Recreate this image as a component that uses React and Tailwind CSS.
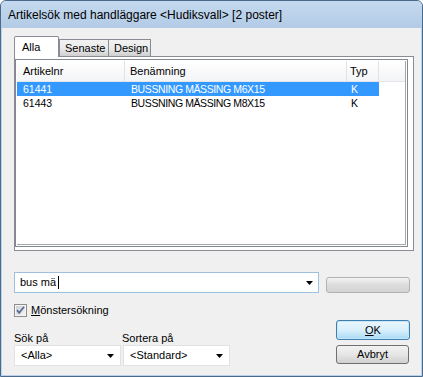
import React from 'react';

const font = "font-['Liberation_Sans',Arial,sans-serif]";

function Arrow() {
  return (
    <svg width="7" height="4" viewBox="0 0 7 4" className="shrink-0">
      <path d="M0 0h7L3.5 4z" fill="#000" />
    </svg>
  );
}

function Tab({ label, active, className = '' }) {
  if (active) {
    return (
      <div className="relative z-10 w-[45px] h-full bg-white border border-b-0 border-[#898c95] rounded-t-[2px] pl-[7px] pt-[3px] text-[11px] leading-[14px]">
        {label}
      </div>
    );
  }
  return (
    <div
      className={`mb-px h-[17px] bg-gradient-to-b from-[#f2f2f2] via-[#ebebeb] to-[#cfcfcf] border-t border-r border-[#898c95] text-[11px] leading-[14px] pt-px ${className}`}
    >
      {label}
    </div>
  );
}

const rows = [
  { nr: '61441', name: 'BUSSNING MÄSSING M6X15', typ: 'K', selected: true },
  { nr: '61443', name: 'BUSSNING MÄSSING M8X15', typ: 'K' },
];

function ListView() {
  return (
    <div className="flex-1 flex flex-col border border-[#828790] p-px bg-white">
      <div className="flex-1 flex flex-col border border-[#a3a7ad] border-l-0 border-t-0">
        {/* header */}
        <div className="flex h-[21px] bg-gradient-to-b from-white to-[#f3f4f6] border-b border-[#e3e6ea] text-[11px]">
          <div className="w-[108px] border-r border-[#dfe3e8] pl-[6px] flex items-center">Artikelnr</div>
          <div className="w-[222px] border-r border-[#dfe3e8] pl-[5px] flex items-center">Benämning</div>
          <div className="w-[32px] border-r border-[#dfe3e8] pl-[3px] flex items-center">Typ</div>
          <div className="flex-1" />
        </div>
        {rows.map((r) => (
          <div
            key={r.nr}
            className={`flex w-[362px] h-[14px] items-center text-[10.5px] leading-[14px] ${
              r.selected ? 'bg-[#3399ff] text-white' : 'text-black'
            }`}
          >
            <div className="w-[108px] pl-[6px]">{r.nr}</div>
            <div className="w-[222px] pl-[6px] tracking-[-0.4px]">{r.name}</div>
            <div className="w-[32px] pl-[4px]">{r.typ}</div>
          </div>
        ))}
      </div>
    </div>
  );
}

function Checkbox() {
  return (
    <svg width="13" height="13" viewBox="0 0 13 13" className="shrink-0">
      <defs>
        <linearGradient id="cb" x1="0" y1="0" x2="1" y2="1">
          <stop offset="0" stopColor="#cfd0d2" />
          <stop offset="1" stopColor="#f4f4f4" />
        </linearGradient>
      </defs>
      <rect x="0.5" y="0.5" width="12" height="12" fill="#f4f4f4" stroke="#8e8f8f" />
      <rect x="2" y="2" width="9" height="9" fill="url(#cb)" />
      <path d="M3 6.2l2.2 2.6L10 2.8" fill="none" stroke="#5b6a9a" strokeWidth="1.8" />
    </svg>
  );
}

function Select({ value }) {
  return (
    <div className="w-[107px] h-[21px] bg-white border border-[#e2e2e2] flex items-center pl-[6px] pr-[6px] text-[11px]">
      <span className="flex-1">{value}</span>
      <Arrow />
    </div>
  );
}

export default function App() {
  return (
    <div
      className={`${font} w-[423px] h-[377px] flex flex-col bg-[#b9d1ea] border border-[#4a6a8c] rounded-t-[6px] overflow-hidden text-black`}
    >
      {/* title bar */}
      <div className="h-[27px] shrink-0 flex items-center pl-[7px] text-[12px] bg-gradient-to-b from-[#c4d9ef] to-[#b3cbe6]">
        Artikelsök med handläggare &lt;Hudiksvall&gt; [2 poster]
      </div>

      <div className="flex-1 flex flex-col px-px pb-px">
        <div className="flex-1 flex flex-col bg-[#f0f0f0] pl-[12px] pr-[7px] pt-[8px]">
          {/* tabs */}
          <div className="flex items-end h-[21px] -mb-px">
            <Tab label="Alla" active />
            <Tab label="Senaste" className="w-[50px] border-l pl-[5px]" />
            <Tab label="Design" className="w-[42px] pl-[5px]" />
          </div>

          {/* tab panel */}
          <div className="h-[195px] flex flex-col bg-white border border-[#898c95] pt-[2px] pr-[5px] pb-[3px]">
            <ListView />
          </div>

          {/* combobox row */}
          <div className="flex items-end mt-[21px] pr-[4px]">
            <div className="w-[305px] h-[21px] bg-white border border-[#9fbfdf] flex items-center pl-[5px] pr-[5px] text-[11px]">
              <span>bus mä</span>
              <span className="w-px h-[13px] bg-black ml-[2px]" />
              <span className="flex-1" />
              <Arrow />
            </div>
            <div className="ml-[7px] w-[84px] h-[16px] rounded-[3px] border border-[#adb2b5] bg-gradient-to-b from-[#f4f4f4] via-[#dcdcdc] to-[#d4d4d4]" />
          </div>

          {/* checkbox */}
          <div className="flex items-center h-[13px] mt-[11px] gap-[4px] text-[11px]">
            <Checkbox />
            <span>
              <span className="underline">M</span>önstersökning
            </span>
          </div>

          {/* bottom */}
          <div className="flex items-start pr-[4px]">
            <div className="flex gap-[2px] pt-[14px]">
              <div className="flex flex-col">
                <span className="h-[14px] text-[11px] leading-[14px]">Sök på</span>
                <Select value="<Alla>" />
              </div>
              <div className="flex flex-col">
                <span className="h-[14px] text-[11px] leading-[14px] -ml-px">Sortera på</span>
                <Select value="<Standard>" />
              </div>
            </div>
            <div className="ml-auto flex flex-col items-start gap-[5px] pt-[3px]">
              <button className="w-[74px] h-[20px] rounded-[3px] border border-[#3c7fb1] bg-gradient-to-b from-[#eaf6fd] via-[#d9f0fc] to-[#a7d9f5] text-[11px] shadow-[inset_0_0_0_1px_#c8e6f8]">
                <span className="underline">O</span>K
              </button>
              <button className="w-[73px] h-[19px] rounded-[3px] border border-[#707070] bg-gradient-to-b from-[#f2f2f2] via-[#e6e6e6] to-[#d0d0d0] text-[11px]">
                Avbryt
              </button>
            </div>
          </div>
        </div>
      </div>
    </div>
  );
}
